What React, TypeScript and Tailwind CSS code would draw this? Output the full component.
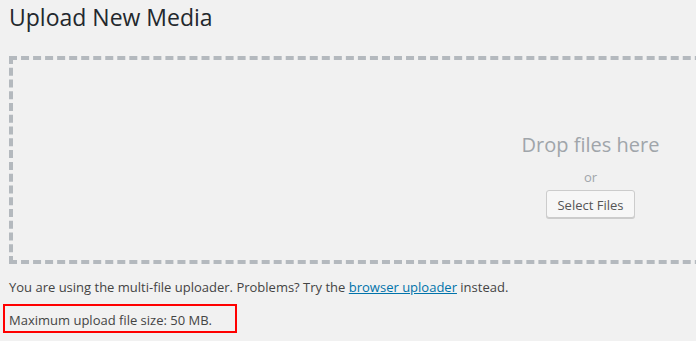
import React from "react";

export default function App() {
  return (
    <div
      className="w-[696px] h-[341px] overflow-hidden bg-[#f1f1f1] text-[#444] text-[13px] leading-[18px]"
      style={{ fontFamily: '"Open Sans", "Liberation Sans", sans-serif' }}
    >
      <div className="pl-[9px] w-[1200px]">
        <h1 className="pt-[3px] text-[23px] leading-[29px] font-normal text-[#23282d]">
          Upload New Media
        </h1>
        <div className="mt-[24px] w-[1163px] h-[208px] border-4 border-dashed border-[#b4b9be] flex flex-col items-center">
          <p className="mt-[71px] text-[20px] leading-[28px] text-[#a0a5aa]">Drop files here</p>
          <p className="mt-[9px] text-[13px] leading-[18px] text-[#a0a5aa]">or</p>
          <button className="mt-[4px] h-[28px] px-[10px] pt-[1px] text-[13px] leading-[26px] text-[#555] bg-[#f7f7f7] border border-[#cccccc] rounded-[3px] shadow-[0_1px_0_#cccccc]">
            Select Files
          </button>
        </div>
        <p className="mt-[14px]">
          You are using the multi-file uploader. Problems? Try the{" "}
          <a href="#" className="text-[#0073aa] underline">browser uploader</a> instead.
        </p>
      </div>
      <div className="ml-[3px] mt-[8px] w-[234px] h-[29px] border-2 border-[#ff0000] pl-[4px] pt-[5px]">
        Maximum upload file size: 50 MB.
      </div>
    </div>
  );
}
